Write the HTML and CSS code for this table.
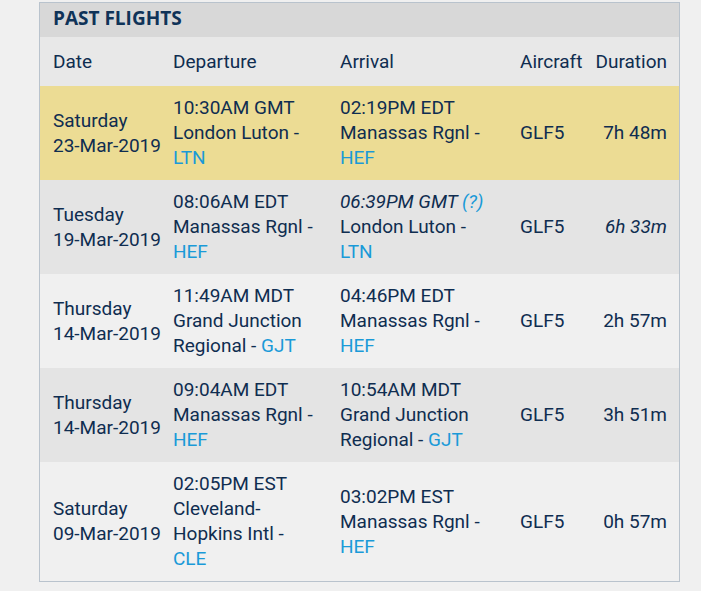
FILE: index.html
```html
<!DOCTYPE html>
<html lang="en">
<head>
    <meta charset="UTF-8">
    <title>Past Flights</title>
    <link rel="stylesheet" href="styles.css">
</head>
<body>
    <div class="panel">
        <h2 class="panel-title">PAST FLIGHTS</h2>
        <table class="flights">
            <colgroup>
                <col class="c-date"><col class="c-dep"><col class="c-arr"><col class="c-ac"><col class="c-dur">
            </colgroup>
            <thead>
                <tr>
                    <th>Date</th>
                    <th>Departure</th>
                    <th>Arrival</th>
                    <th>Aircraft</th>
                    <th class="dur">Duration</th>
                </tr>
            </thead>
            <tbody>
                <tr class="current">
                    <td>Saturday<br>23-Mar-2019</td>
                    <td class="place">10:30AM GMT<br>London Luton - <a href="#">LTN</a></td>
                    <td class="place">02:19PM EDT<br>Manassas Rgnl - <a href="#">HEF</a></td>
                    <td>GLF5</td>
                    <td class="dur">7h 48m</td>
                </tr>
                <tr class="alt">
                    <td>Tuesday<br>19-Mar-2019</td>
                    <td class="place">08:06AM EDT<br>Manassas Rgnl - <a href="#">HEF</a></td>
                    <td class="place"><em>06:39PM GMT <a href="#">(?)</a></em><br>London Luton - <a href="#">LTN</a></td>
                    <td>GLF5</td>
                    <td class="dur"><em>6h 33m</em></td>
                </tr>
                <tr>
                    <td>Thursday<br>14-Mar-2019</td>
                    <td class="place">11:49AM MDT<br>Grand Junction Regional - <a href="#">GJT</a></td>
                    <td class="place">04:46PM EDT<br>Manassas Rgnl - <a href="#">HEF</a></td>
                    <td>GLF5</td>
                    <td class="dur">2h 57m</td>
                </tr>
                <tr class="alt">
                    <td>Thursday<br>14-Mar-2019</td>
                    <td class="place">09:04AM EDT<br>Manassas Rgnl - <a href="#">HEF</a></td>
                    <td class="place">10:54AM MDT<br>Grand Junction Regional - <a href="#">GJT</a></td>
                    <td>GLF5</td>
                    <td class="dur">3h 51m</td>
                </tr>
                <tr>
                    <td>Saturday<br>09-Mar-2019</td>
                    <td class="place">02:05PM EST<br>Cleveland-Hopkins Intl - <a href="#">CLE</a></td>
                    <td class="place">03:02PM EST<br>Manassas Rgnl - <a href="#">HEF</a></td>
                    <td>GLF5</td>
                    <td class="dur">0h 57m</td>
                </tr>
            </tbody>
        </table>
    </div>
</body>
</html>
```
FILE: styles.css
```css
body { margin: 0; background-color: #f0f0f0; font-family: Roboto, "Liberation Sans", sans-serif; color: #0f2d50; }
.panel { margin: 2px 0 0 39px; width: 639px; border: 1px solid #b9c3cd; }
.panel-title { margin: 0; height: 34px; line-height: 31px; padding-left: 13px; background-color: #d8d8d8; font-family: "Open Sans", sans-serif; font-size: 19px; font-weight: 700; color: #0f3358; }
.flights { width: 100%; border-collapse: collapse; table-layout: fixed; font-size: 19px; line-height: 25px; }
.c-date { width: 127px; }
.c-dep { width: 167px; }
.c-arr { width: 180px; }
.c-ac { width: 75px; }
.c-dur { width: 90px; }
th, td { padding: 9px 6px 10px 6px; text-align: left; vertical-align: middle; }
th { font-weight: 400; background-color: #e8e8e8; padding-top: 12px; padding-bottom: 12px; }
th:first-child, td:first-child { padding-left: 13px; }
td.place { padding-right: 18px; }
.dur { text-align: right; padding-right: 12px; }
tbody tr { background-color: #f0f0f0; }
tr.alt { background-color: #e4e4e4; }
tr.current { background-color: #ecdc94; }
a { color: #1a9ad8; text-decoration: none; }
em { font-style: italic; }
```
